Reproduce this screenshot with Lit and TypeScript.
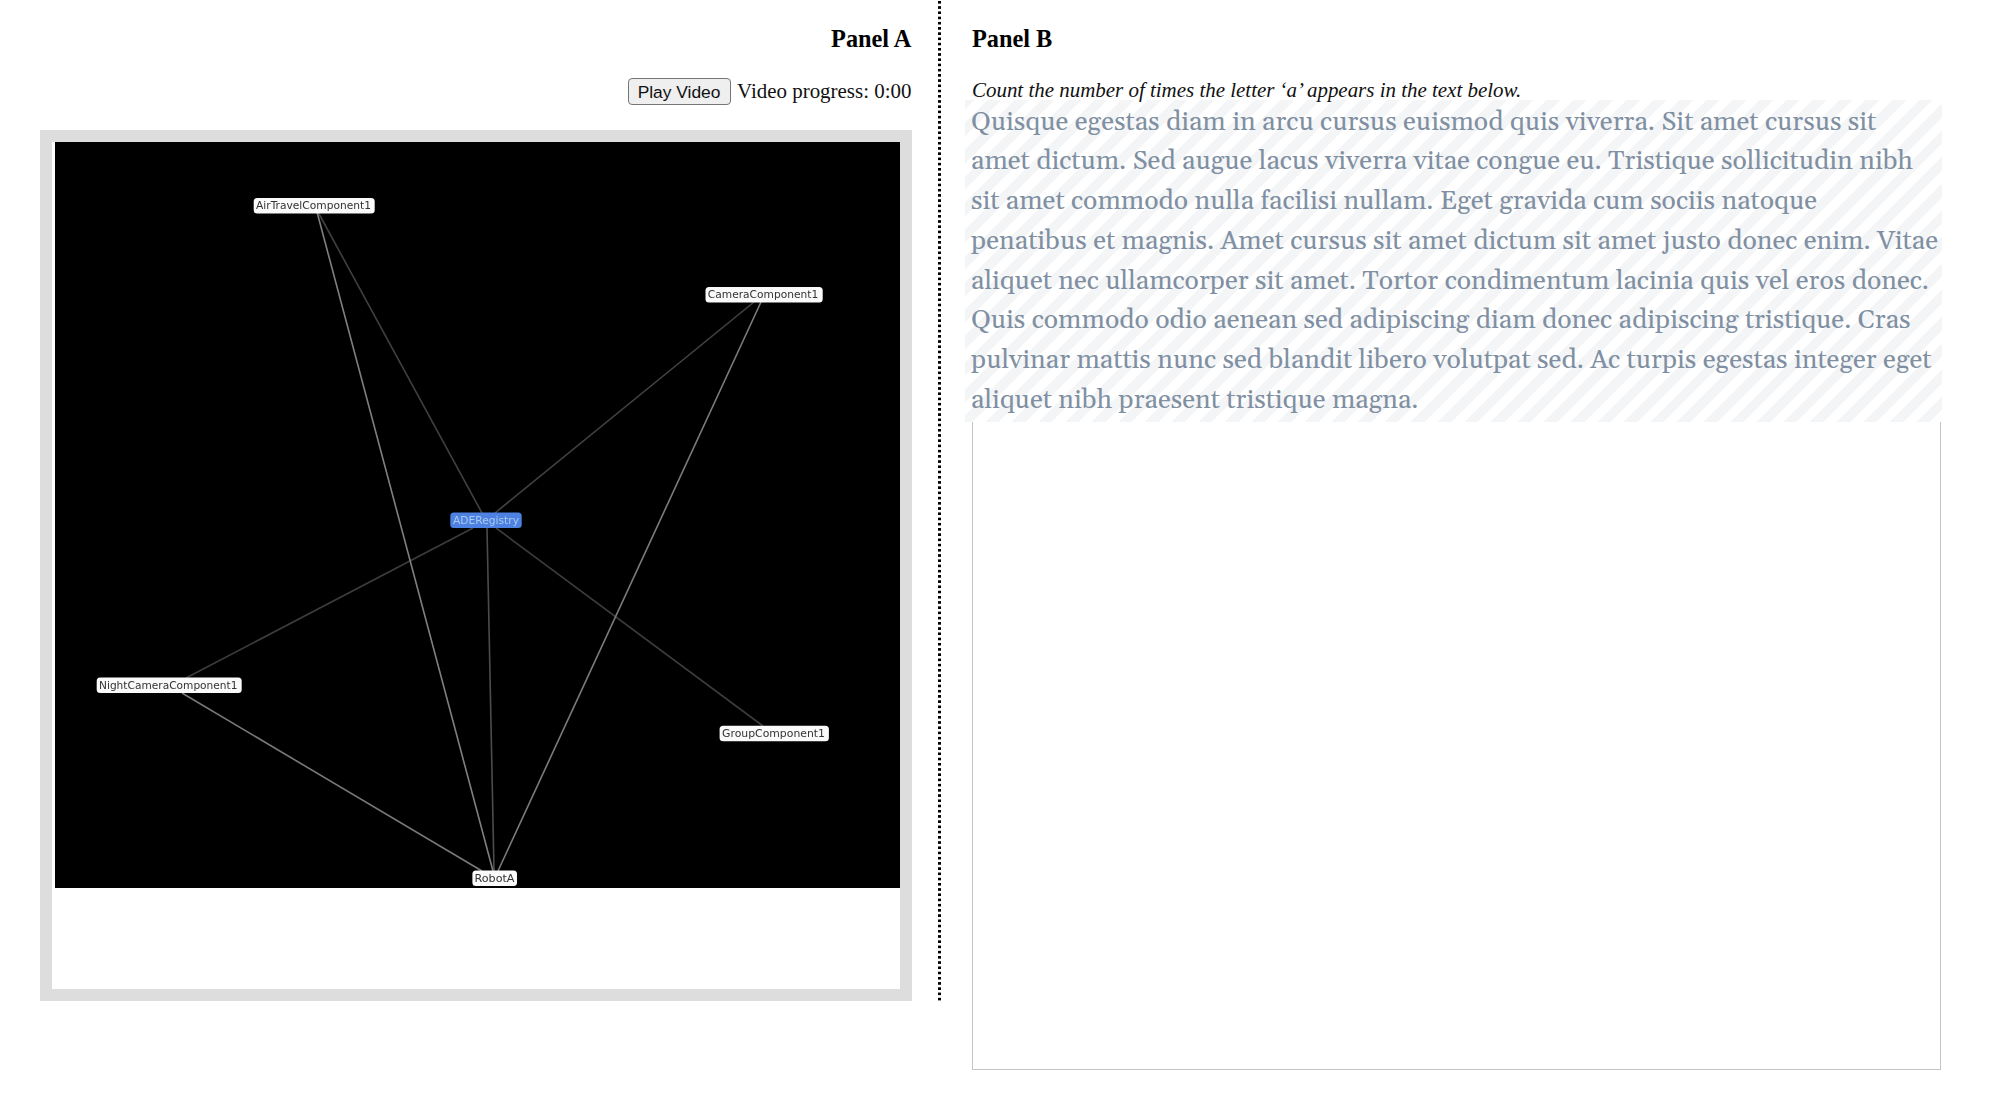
import { LitElement, html, svg, css } from "lit";
import { customElement } from "lit/decorators.js";

interface GraphNode {
  label: string;
  x: number;
  y: number;
  w: number;
  tx: number;
  tw: number;
  active?: boolean;
}

const NODES: GraphNode[] = [
  { label: "AirTravelComponent1", x: 253.7, y: 198, w: 121, tx: 256, tw: 115 },
  { label: "CameraComponent1", x: 705.5, y: 287, w: 117.2, tx: 707.8, tw: 110.5 },
  { label: "ADERegistry", x: 450.3, y: 512.6, w: 71.4, tx: 453, tw: 66, active: true },
  { label: "NightCameraComponent1", x: 96.7, y: 677.5, w: 145, tx: 99, tw: 138.5 },
  { label: "GroupComponent1", x: 719.6, y: 725.8, w: 109.3, tx: 722, tw: 103 },
  { label: "RobotA", x: 472.4, y: 870.6, w: 44.6, tx: 474.5, tw: 40 },
];

// x1, y1, x2, y2, stroke
const EDGES: [number, number, number, number, string][] = [
  [318, 212, 482, 513, "#404040"],
  [754, 302, 495, 513, "#424242"],
  [473, 528, 186, 678, "#3c3c3c"],
  [487, 528, 494, 871, "#4c4c4c"],
  [496, 528, 763, 726, "#3c3c3c"],
  [317, 212, 493, 871, "#808080"],
  [761, 302, 498, 871, "#7c7c7c"],
  [182, 693, 482, 871, "#787878"],
];

const LINES: [string, number][] = [
  ["Quisque egestas diam in arcu cursus euismod quis viverra. Sit amet cursus sit", 905.3],
  ["amet dictum. Sed augue lacus viverra vitae congue eu. Tristique sollicitudin nibh", 942],
  ["sit amet commodo nulla facilisi nullam. Eget gravida cum sociis natoque", 846],
  ["penatibus et magnis. Amet cursus sit amet dictum sit amet justo donec enim. Vitae", 967],
  ["aliquet nec ullamcorper sit amet. Tortor condimentum lacinia quis vel eros donec.", 958],
  ["Quis commodo odio aenean sed adipiscing diam donec adipiscing tristique. Cras", 939.5],
  ["pulvinar mattis nunc sed blandit libero volutpat sed. Ac turpis egestas integer eget", 960.5],
  ["aliquet nibh praesent tristique magna.", 447.5],
];

@customElement("app-root")
export class AppRoot extends LitElement {
  static styles = css`
    :host {
      display: block;
      height: 1111px;
      overflow: hidden;
      background: #fff;
      color: #111;
      font: 20.95px/24px "Liberation Serif", serif;
    }
    .page {
      display: flex;
      align-items: flex-start;
    }
    .left {
      box-sizing: border-box;
      width: 941px;
      height: 1001px;
      padding: 24px 29px 0 40px;
      display: flex;
      flex-direction: column;
      align-items: flex-end;
      background: linear-gradient(#000 0 2.7px, transparent 2.7px) right 1px / 2.6px 5.22px repeat-y;
    }
    .title {
      margin: 0;
      color: #000;
      font-size: 24.3px;
      line-height: 30px;
      font-weight: bold;
    }
    .left .title,
    .progress {
      margin-right: 0.6px;
    }
    .controls {
      display: flex;
      align-items: center;
      gap: 6.5px;
      margin-top: 23px;
      height: 28px;
    }
    .play {
      box-sizing: border-box;
      width: 103px;
      height: 27px;
      padding: 1px 0 0;
      border: 1px solid #767676;
      border-radius: 4px;
      background: #efefef;
      color: #111;
      font: 17.4px/22px "Liberation Sans", sans-serif;
      white-space: nowrap;
    }
    .progress {
      white-space: nowrap;
      line-height: 22px;
      padding-bottom: 1px;
    }
    .frame {
      box-sizing: border-box;
      width: 872px;
      height: 871px;
      margin-top: 25px;
      padding-left: 3px;
      border: 12px solid #ddd;
    }
    .frame svg {
      display: block;
      background: #000;
    }
    .soft {
      filter: blur(0.45px);
    }
    .node {
      font-family: "DejaVu Sans", sans-serif;
      font-size: 10.8px;
    }
    .right {
      box-sizing: border-box;
      width: 1001px;
      padding: 24px 0 0 31px;
    }
    .hint {
      margin-top: 23px;
      height: 23px;
      line-height: 27px;
      font-style: italic;
      white-space: nowrap;
    }
    .answer {
      box-sizing: border-box;
      width: 969px;
      height: 970px;
      border: 1px solid #c4c4c4;
      border-top-width: 0;
    }
    .passage {
      width: 977.6px;
      height: 322px;
      margin-left: -8.5px;
      background: repeating-linear-gradient(
        -45deg,
        #fff 0 8.6px,
        #f4f5f7 8.6px 18.2px,
        #fff 18.2px 18.81px
      );
    }
    .passage svg {
      display: block;
    }
    .copy {
      font-family: Georgia, Gelasio, "Liberation Serif", serif;
      font-size: 26.4px;
      fill: #8090a2;
    }
  `;

  render() {
    return html`
      <main class="page">
        <section class="left">
          <h3 class="title">Panel A</h3>
          <div class="controls">
            <button class="play">Play Video</button>
            <span class="progress">Video progress: 0:00</span>
          </div>
          <div class="frame">
            <svg width="845" height="746" viewBox="55 142 845 746">
              <g class="soft">
                ${EDGES.map(
                  ([x1, y1, x2, y2, c]) =>
                    svg`<line x1=${x1} y1=${y1} x2=${x2} y2=${y2} stroke=${c} stroke-width="1.6" />`
                )}
                ${NODES.map(
                  (n) => svg`
                    <rect x=${n.x} y=${n.y} width=${n.w} height="15.4" rx="3.5"
                      fill=${n.active ? "#4d82e2" : "#fafafa"} />
                    <text class="node" x=${n.tx} y=${n.y + 11.2} textLength=${n.tw}
                      lengthAdjust="spacingAndGlyphs"
                      fill=${n.active ? "#a9c9ee" : "#333"}>${n.label}</text>`
                )}
              </g>
            </svg>
          </div>
        </section>
        <section class="right">
          <h3 class="title">Panel B</h3>
          <div class="hint">Count the number of times the letter ‘a’ appears in the text below.</div>
          <div class="answer">
            <div class="passage">
              <svg width="977" height="322">
                ${LINES.map(
                  ([t, w], i) =>
                    svg`<text class="copy" x="6" y=${29.6 + i * 39.75} textLength=${w}
                      lengthAdjust="spacingAndGlyphs">${t}</text>`
                )}
              </svg>
            </div>
          </div>
        </section>
      </main>
    `;
  }
}
